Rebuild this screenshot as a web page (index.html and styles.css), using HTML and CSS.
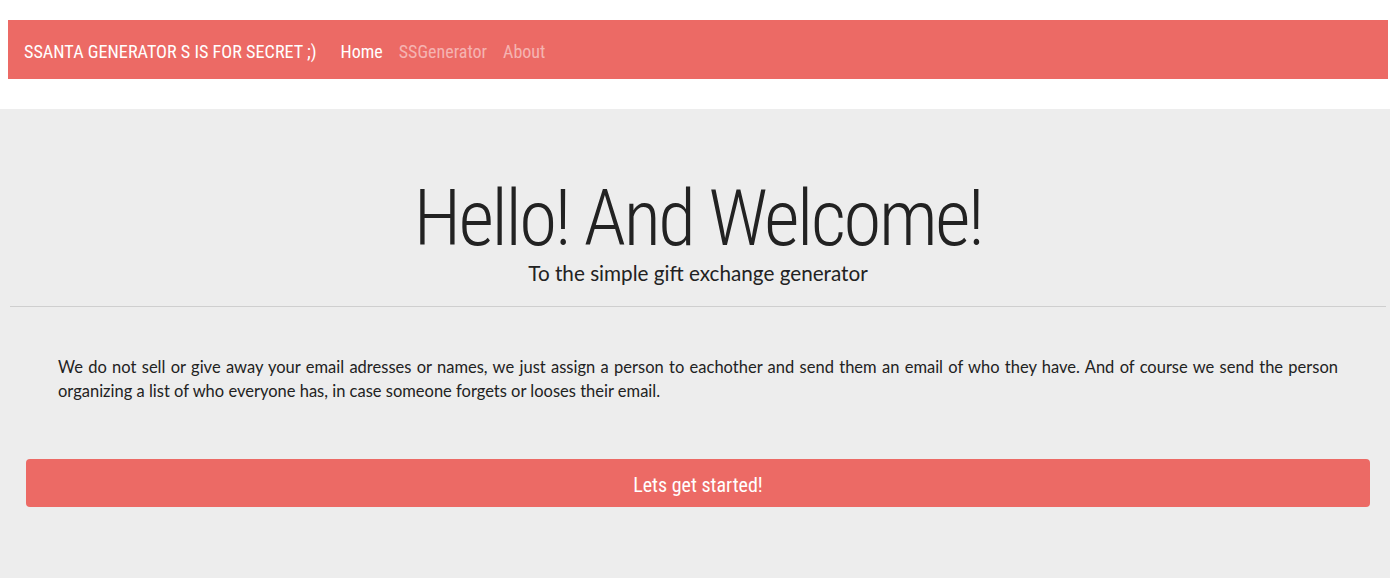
FILE: index.html
```html
<!DOCTYPE html>
<html lang="en">
<head>
<meta charset="utf-8">
<title>SSanta Generator</title>
<link rel="stylesheet" href="styles.css">
</head>
<body>
<nav class="navbar">
  <a class="brand" href="#">SSANTA GENERATOR S IS FOR SECRET ;)</a>
  <ul class="nav-links">
    <li><a class="nav-link active" href="#">Home</a></li>
    <li><a class="nav-link" href="#">SSGenerator</a></li>
    <li><a class="nav-link" href="#">About</a></li>
  </ul>
</nav>
<main class="jumbo">
  <header class="hero">
    <h1 class="hero-title">Hello! And Welcome!</h1>
    <p class="hero-sub">To the simple gift exchange generator</p>
  </header>
  <hr class="divider">
  <p class="intro">We do not sell or give away your email adresses or names, we just assign a person to eachother and send them an email of who they have. And of course we send the person organizing a list of who everyone has, in case someone forgets or looses their email.</p>
  <button class="start-btn" type="button">Lets get started!</button>
</main>
</body>
</html>
```
FILE: styles.css
```css
html, body {
  margin: 0;
  padding: 0;
  background: #ffffff;
}
body {
  font-family: Lato, "Noto Sans", sans-serif;
  color: #222222;
}
.navbar {
  display: flex;
  align-items: center;
  height: 59px;
  box-sizing: border-box;
  margin: 20px 2px 0 8px;
  padding: 3px 16px 0;
  background: #ec6a65;
  font-family: "Roboto Condensed", "Liberation Sans Narrow", sans-serif;
}
.brand {
  color: #ffffff;
  text-decoration: none;
  font-size: 18.2px;
  margin-right: 24px;
}
.nav-links {
  display: flex;
  gap: 16px;
  list-style: none;
  margin: 0;
  padding: 0;
}
.nav-link {
  color: rgba(255, 255, 255, 0.5);
  text-decoration: none;
  font-size: 18px;
}
.nav-link.active {
  color: #ffffff;
}
.jumbo {
  margin-top: 30px;
  background: #ededed;
  padding: 72px 0 71px;
  min-height: 470px;
  box-sizing: border-box;
}
.hero {
  margin: 0 2px 0 8px;
  text-align: center;
}
.hero-title {
  margin: 0;
  font-family: "Roboto Condensed", "Liberation Sans Narrow", sans-serif;
  font-weight: 300;
  font-size: 77px;
  letter-spacing: -2.4px;
  line-height: 1;
  color: #222222;
}
.hero-sub {
  margin: 3px 0 0;
  font-size: 20.7px;
  line-height: 24px;
  font-weight: 400;
}
.divider {
  margin: 21px 4px 0 10px;
  border: 0;
  border-top: 1px solid #cfcfcf;
  height: 0;
}
.intro {
  margin: 48px 52px 0 58px;
  font-size: 16.5px;
  line-height: 24px;
  text-align: justify;
}
.start-btn {
  display: block;
  width: calc(100% - 46px);
  height: 48px;
  margin: 56px 20px 0 26px;
  padding: 4px 0 0;
  background: #ec6a65;
  color: #ffffff;
  border: 0;
  border-radius: 4px;
  font-family: "Roboto Condensed", "Liberation Sans Narrow", sans-serif;
  font-size: 20px;
  cursor: pointer;
}
```
